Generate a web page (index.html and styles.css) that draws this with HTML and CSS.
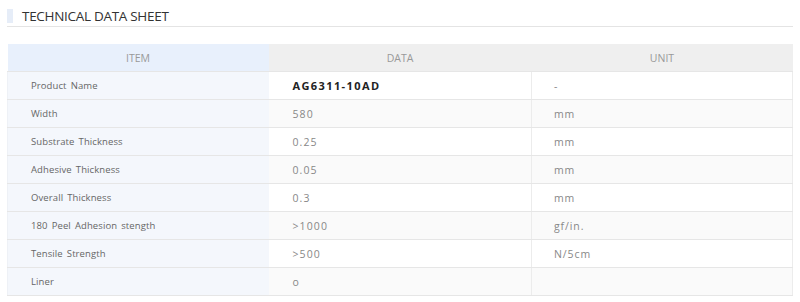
FILE: index.html
```html
<!DOCTYPE html>
<html>
<head>
<meta charset="utf-8">
<link rel="stylesheet" href="styles.css">
</head>
<body>
<div class="page">
  <h2 class="title"><span class="title-bar"></span>TECHNICAL DATA SHEET</h2>
  <table class="spec">
    <thead>
      <tr><th class="c-item">ITEM</th><th class="c-data">DATA</th><th class="c-unit">UNIT</th></tr>
    </thead>
    <tbody>
      <tr><td class="c-item">Product Name</td><td class="c-data strong">AG6311-10AD</td><td class="c-unit">-</td></tr>
      <tr><td class="c-item">Width</td><td class="c-data">580</td><td class="c-unit">mm</td></tr>
      <tr><td class="c-item">Substrate Thickness</td><td class="c-data">0.25</td><td class="c-unit">mm</td></tr>
      <tr><td class="c-item">Adhesive Thickness</td><td class="c-data">0.05</td><td class="c-unit">mm</td></tr>
      <tr><td class="c-item">Overall Thickness</td><td class="c-data">0.3</td><td class="c-unit">mm</td></tr>
      <tr><td class="c-item">180 Peel Adhesion stength</td><td class="c-data">&gt;1000</td><td class="c-unit">gf/in.</td></tr>
      <tr><td class="c-item">Tensile Strength</td><td class="c-data">&gt;500</td><td class="c-unit">N/5cm</td></tr>
      <tr><td class="c-item">Liner</td><td class="c-data">o</td><td class="c-unit"></td></tr>
    </tbody>
  </table>
</div>
</body>
</html>
```
FILE: styles.css
```css
html, body {
  margin: 0;
  padding: 0;
  background: #fff;
}
body {
  font-family: "Open Sans", "Noto Sans", sans-serif;
}
.page {
  padding: 7px 7px 0 7px;
}
.title {
  display: flex;
  align-items: center;
  margin: 0;
  font-size: 13.5px;
  font-weight: 400;
  line-height: 18px;
  color: #333;
  letter-spacing: -0.3px;
  border-bottom: 1px solid #e4e4e4;
  padding-bottom: 1px;
}
.title-bar {
  display: inline-block;
  width: 6px;
  height: 14px;
  background: #e6edf8;
  margin-right: 9px;
}
.spec {
  margin-top: 17px;
  width: 786px;
  border-collapse: collapse;
  table-layout: fixed;
  font-size: 10.5px;
  color: #777;
}
.spec th, .spec td {
  height: 27px;
  padding: 0;
  border-bottom: 1px solid #e6e6e6;
  font-weight: 400;
}
.spec th {
  color: #999;
  text-align: center;
  font-size: 10.5px;
}
.spec th.c-item {
  background: #e8f0fc;
  width: 261px;
}
.spec th.c-data {
  background: #efefef;
  width: 263px;
}
.spec th.c-unit {
  background: #efefef;
}
.spec td {
  padding-left: 23px;
}
.spec td.c-item {
  background: #f4f7fc;
  color: #666;
  font-size: 9.5px;
  letter-spacing: 0.1px;
  word-spacing: 1.5px;
  border-left: 1px solid #eef1f6;
}
.spec td.c-data, .spec td.c-unit {
  letter-spacing: 1.1px;
  color: #888;
}
.spec td.c-data {
  padding-left: 24px;
}
.spec td.c-unit {
  padding-left: 22px;
  letter-spacing: 0.9px;
  border-left: 1px solid #ececec;
  border-right: 1px solid #ececec;
}
.spec tbody tr:nth-child(even) td.c-data,
.spec tbody tr:nth-child(even) td.c-unit {
  background: #fafafa;
}
.spec td.strong {
  color: #222;
  font-weight: 700;
  font-size: 11px;
  letter-spacing: 1.4px;
}
```
